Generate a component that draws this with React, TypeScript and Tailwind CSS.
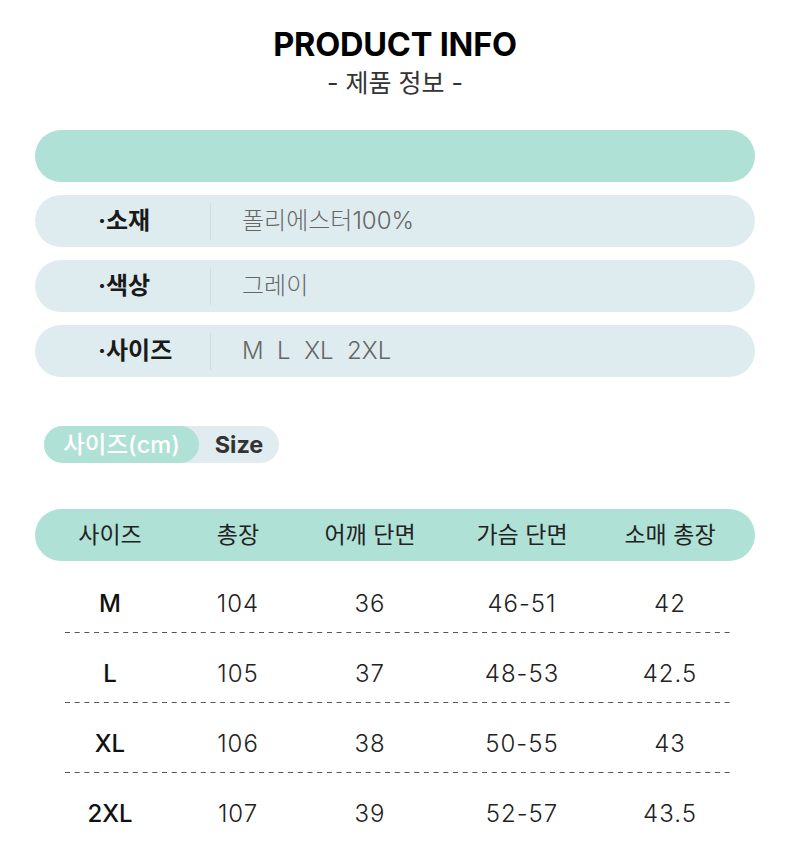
const FONT = "font-['Inter','Noto_Sans_CJK_KR',sans-serif]";

const specs = [
  { label: "·소재", value: "폴리에스터100%" },
  { label: "·색상", value: "그레이" },
  { label: "·사이즈", value: "M  L  XL  2XL" },
];

const headers = ["사이즈", "총장", "어깨 단면", "가슴 단면", "소매 총장"];

const rows = [
  ["M", "104", "36", "46-51", "42"],
  ["L", "105", "37", "48-53", "42.5"],
  ["XL", "106", "38", "50-55", "43"],
  ["2XL", "107", "39", "52-57", "43.5"],
];

const cols = "grid grid-cols-[150px_106px_158px_146px_150px]";

function Dashes() {
  return (
    <svg className="ml-[30px] block h-px w-[665px]" viewBox="0 0 665 1" preserveAspectRatio="none">
      <line x1="0" y1="0.5" x2="665" y2="0.5" stroke="#555" strokeWidth="1" strokeDasharray="5 4.7" />
    </svg>
  );
}

export default function App() {
  return (
    <div className={`${FONT} min-h-[848px] w-[790px] bg-white px-[35px] pt-[26px]`}>
      <div className="flex flex-col items-center">
        <h1 className="text-[32.5px] leading-[38px] font-bold tracking-[-0.2px] text-black">PRODUCT INFO</h1>
        <p className="mt-[3px] text-[25px] leading-[32px] text-[#333]">- 제품 정보 -</p>
      </div>

      <div className="mt-[31px] h-[52px] rounded-full bg-[#b0e1d6]" />

      <div className="mt-[13px] flex flex-col gap-[13px]">
        {specs.map((s) => (
          <div key={s.label} className="flex h-[52px] items-center rounded-full bg-[#dfecef]">
            <div className="w-[175px] pl-[63px] text-[24px] font-bold text-[#1a1a1a]">{s.label}</div>
            <div className="h-[37px] w-px bg-[#cfdde0]" />
            <div className="pl-[31px] text-[24px] font-light whitespace-pre text-[#666]">{s.value}</div>
          </div>
        ))}
      </div>

      <div className="mt-[49px] ml-[9px] flex h-[37px] w-[235px] items-center rounded-full bg-[#e0ecef]">
        <div className="flex h-full w-[155px] items-center justify-center rounded-full bg-[#b0e1d6] text-[23.5px] font-medium text-white">
          사이즈(cm)
        </div>
        <div className="flex-1 text-center text-[23.5px] font-bold text-[#333]">Size</div>
      </div>

      <div className={`${cols} mt-[46px] h-[52px] items-center rounded-full bg-[#b0e1d6] text-center text-[23px] text-[#222]`}>
        {headers.map((h) => (
          <div key={h}>{h}</div>
        ))}
      </div>

      <div className="mt-[2px] flex flex-col">
        {rows.map((r, i) => (
          <div key={r[0]} className="flex h-[70px] flex-col">
            <div className={`${cols} flex-1 items-center pt-[12px] text-center text-[24px] text-[#222]`}>
              {r.map((c, j) => (
                <div key={j} className={j === 0 ? "font-medium text-[#111]" : "font-light tracking-[1px]"}>
                  {c}
                </div>
              ))}
            </div>
            {i < rows.length - 1 && <Dashes />}
          </div>
        ))}
      </div>
    </div>
  );
}
